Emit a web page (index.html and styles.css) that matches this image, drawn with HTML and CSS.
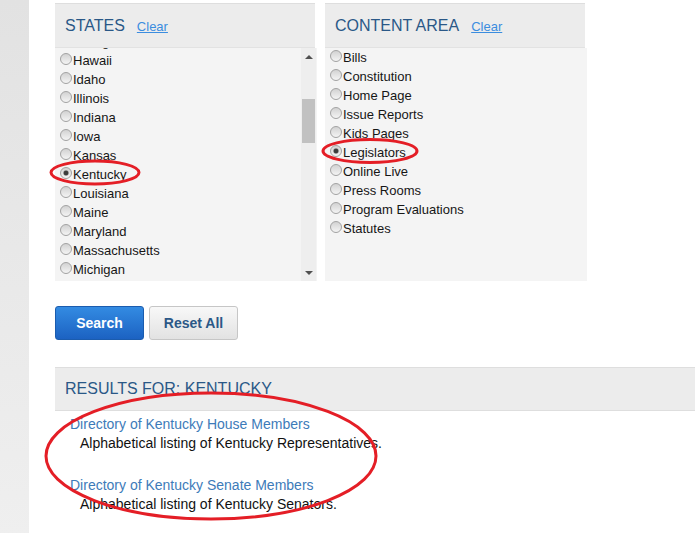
FILE: index.html
```html
<!DOCTYPE html>
<html lang="en">
<head>
<meta charset="utf-8">
<title>Search</title>
<link rel="stylesheet" href="styles.css">
</head>
<body>
<div class="page">
  <aside class="side"></aside>
  <main class="main">
    <div class="filters">
      <section class="panel">
        <header class="panel-head"><h2>STATES</h2><a href="#" class="clear">Clear</a></header>
        <div class="panel-body">
          <div class="viewport">
            <ul class="opts states">
              <li><label><input type="radio" name="state">Georgia</label></li>
              <li><label><input type="radio" name="state">Hawaii</label></li>
              <li><label><input type="radio" name="state">Idaho</label></li>
              <li><label><input type="radio" name="state">Illinois</label></li>
              <li><label><input type="radio" name="state">Indiana</label></li>
              <li><label><input type="radio" name="state">Iowa</label></li>
              <li><label><input type="radio" name="state">Kansas</label></li>
              <li><label><input type="radio" name="state" checked>Kentucky</label></li>
              <li><label><input type="radio" name="state">Louisiana</label></li>
              <li><label><input type="radio" name="state">Maine</label></li>
              <li><label><input type="radio" name="state">Maryland</label></li>
              <li><label><input type="radio" name="state">Massachusetts</label></li>
              <li><label><input type="radio" name="state">Michigan</label></li>
              <li><label><input type="radio" name="state">Minnesota</label></li>
            </ul>
          </div>
          <div class="scrollbar">
            <span class="sb-btn"><span class="tri up"></span></span>
            <span class="sb-track"><span class="sb-thumb"></span></span>
            <span class="sb-btn"><span class="tri down"></span></span>
          </div>
        </div>
      </section>
      <section class="panel">
        <header class="panel-head"><h2>CONTENT AREA</h2><a href="#" class="clear">Clear</a></header>
        <div class="panel-body">
          <div class="viewport">
            <ul class="opts areas">
              <li><label><input type="radio" name="area">Bills</label></li>
              <li><label><input type="radio" name="area">Constitution</label></li>
              <li><label><input type="radio" name="area">Home Page</label></li>
              <li><label><input type="radio" name="area">Issue Reports</label></li>
              <li><label><input type="radio" name="area">Kids Pages</label></li>
              <li><label><input type="radio" name="area" checked>Legislators</label></li>
              <li><label><input type="radio" name="area">Online Live</label></li>
              <li><label><input type="radio" name="area">Press Rooms</label></li>
              <li><label><input type="radio" name="area">Program Evaluations</label></li>
              <li><label><input type="radio" name="area">Statutes</label></li>
            </ul>
          </div>
        </div>
      </section>
    </div>

    <div class="actions">
      <button class="btn btn-primary" type="button">Search</button>
      <button class="btn btn-default" type="button">Reset All</button>
    </div>

    <section class="results">
      <h2 class="results-head">RESULTS FOR: KENTUCKY</h2>
      <ul class="result-list">
        <li>
          <a href="#">Directory of Kentucky House Members</a>
          <p>Alphabetical listing of Kentucky Representatives.</p>
        </li>
        <li>
          <a href="#">Directory of Kentucky Senate Members</a>
          <p>Alphabetical listing of Kentucky Senators.</p>
        </li>
      </ul>
    </section>
  </main>

  <svg class="marks" width="695" height="533" viewBox="0 0 695 533" aria-hidden="true">
    <ellipse cx="95" cy="172.5" rx="44" ry="11.5"/>
    <ellipse cx="370" cy="151" rx="47" ry="11.5"/>
    <ellipse cx="211" cy="456" rx="165" ry="63"/>
  </svg>
</div>
</body>
</html>
```
FILE: styles.css
```css
* { box-sizing: border-box; }
html, body { margin: 0; padding: 0; }
body {
  font-family: "Liberation Sans", Arial, sans-serif;
  background: #fff;
  color: #111;
  overflow: hidden;
}
.page {
  position: relative;
  display: flex;
  min-height: 533px;
}
.side {
  width: 29px;
  flex: none;
  background: linear-gradient(#e2e2e2, #efefef);
}
.main {
  flex: 1;
  min-width: 0;
  padding: 3px 0 0 26px;
}

/* filter panels */
.filters {
  display: flex;
  gap: 10px;
}
.panel {
  width: 260px;
}
.panel-head {
  display: flex;
  align-items: baseline;
  height: 45px;
  padding-left: 10px;
  background: #ececec;
  border-top: 1px solid #dedede;
  border-bottom: 1px solid #e2e2e2;
}
.panel-head h2 {
  margin: 0;
  font-size: 16px;
  font-weight: normal;
  line-height: 43px;
  color: #2a5887;
}
.clear {
  margin-left: 12px;
  font-size: 13px;
  color: #3b8ddf;
  text-decoration: underline;
}
.panel-body {
  display: flex;
  height: 233px;
  margin-right: -2px;
  background: #f4f4f4;
  overflow: hidden;
}
.viewport {
  flex: 1;
  overflow: hidden;
}
.opts {
  list-style: none;
  margin: 0;
  padding: 0;
  font-size: 13px;
  line-height: 19px;
  color: #161616;
}
.states {
  margin-top: -16px;
}
.opts label {
  display: flex;
  align-items: flex-start;
  white-space: nowrap;
}
.opts input {
  appearance: none;
  -webkit-appearance: none;
  width: 12px;
  height: 12px;
  margin: 2px 1px 0 5px;
  border: 1px solid #a2a2a2;
  border-radius: 50%;
  background: linear-gradient(#d2d2d2, #f4f4f4);
  flex: none;
}
.opts input:checked {
  background:
    radial-gradient(circle, #3c3c3c 0 2px, rgba(60,60,60,0.4) 2.6px, transparent 3.2px),
    linear-gradient(#d2d2d2, #f4f4f4);
}

/* fake scrollbar */
.scrollbar {
  width: 15px;
  flex: none;
  display: flex;
  flex-direction: column;
  background: #eeeeee;
  margin-right: 1px;
}
.sb-btn {
  height: 17px;
  display: flex;
  align-items: center;
  justify-content: center;
  flex: none;
}
.sb-track {
  flex: 1;
  display: block;
}
.sb-thumb {
  display: block;
  margin: 34px 0 0 1px;
  width: 13px;
  height: 44px;
  background: #c1c1c1;
}
.tri {
  width: 0;
  height: 0;
  border-left: 4px solid transparent;
  border-right: 4px solid transparent;
}
.tri.up { border-bottom: 4px solid #505050; }
.tri.down { border-top: 4px solid #505050; }

/* buttons */
.actions {
  display: flex;
  gap: 5px;
  margin-top: 25px;
}
.btn {
  height: 34px;
  border-radius: 3px;
  font-family: "Liberation Sans", Arial, sans-serif;
  font-size: 14px;
  font-weight: bold;
  cursor: pointer;
}
.btn-primary {
  width: 89px;
  color: #fff;
  background: linear-gradient(#338be2, #1c62c2);
  border: 1px solid #1b5cae;
}
.btn-default {
  width: 89px;
  color: #2b5887;
  background: linear-gradient(#f8f8f8, #e2e2e2);
  border: 1px solid #c6c6c6;
}

/* results */
.results {
  margin-top: 27px;
}
.results-head {
  margin: 0;
  height: 44px;
  padding-left: 10px;
  font-size: 16px;
  font-weight: normal;
  line-height: 42px;
  color: #2a5887;
  background: #ececec;
  border-top: 1px solid #dedede;
  border-bottom: 1px solid #dedede;
}
.result-list {
  list-style: none;
  margin: 0;
  padding: 4px 0 0 15px;
  font-size: 14px;
  line-height: 19px;
}
.result-list li {
  margin-bottom: 23px;
}
.result-list a {
  color: #3d7bb9;
  text-decoration: none;
}
.result-list p {
  margin: 0 0 0 10px;
  color: #111;
}

/* hand-drawn annotation marks */
.marks {
  position: absolute;
  left: 0;
  top: 0;
  pointer-events: none;
}
.marks ellipse {
  fill: none;
  stroke: #e41e26;
  stroke-width: 3;
}
```
